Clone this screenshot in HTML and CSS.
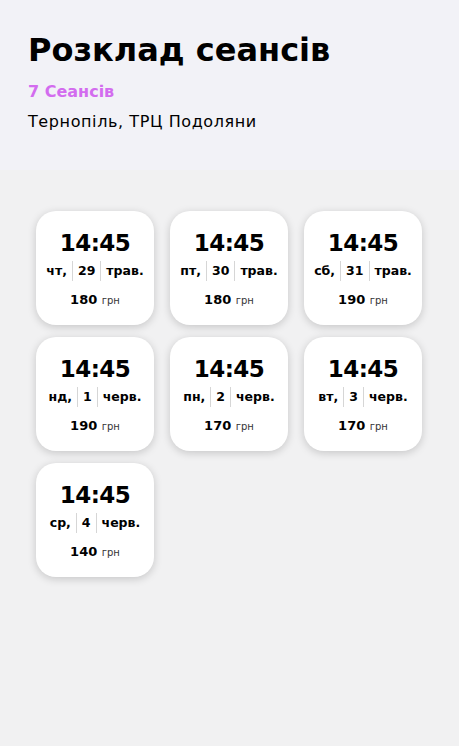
FILE: index.html
```html
<!DOCTYPE html>
<html lang="uk">
<head>
    <meta charset="UTF-8">
    <meta name="viewport" content="width=device-width, initial-scale=1.0">
    <title>Розклад сеансів</title>
    <link rel="stylesheet" href="styles.css">
</head>
<body>
    <header class="header">
        <h1 class="title">Розклад сеансів</h1>
        <div class="count">7 Сеансів</div>
        <div class="place">Тернопіль, ТРЦ Подоляни</div>
    </header>
    <main class="sessions">
        <div class="card">
            <div class="time">14:45</div>
            <div class="date"><span>чт,</span><span>29</span><span>трав.</span></div>
            <div class="price">180 <small>грн</small></div>
        </div>
        <div class="card">
            <div class="time">14:45</div>
            <div class="date"><span>пт,</span><span>30</span><span>трав.</span></div>
            <div class="price">180 <small>грн</small></div>
        </div>
        <div class="card">
            <div class="time">14:45</div>
            <div class="date"><span>сб,</span><span>31</span><span>трав.</span></div>
            <div class="price">190 <small>грн</small></div>
        </div>
        <div class="card">
            <div class="time">14:45</div>
            <div class="date"><span>нд,</span><span>1</span><span>черв.</span></div>
            <div class="price">190 <small>грн</small></div>
        </div>
        <div class="card">
            <div class="time">14:45</div>
            <div class="date"><span>пн,</span><span>2</span><span>черв.</span></div>
            <div class="price">170 <small>грн</small></div>
        </div>
        <div class="card">
            <div class="time">14:45</div>
            <div class="date"><span>вт,</span><span>3</span><span>черв.</span></div>
            <div class="price">170 <small>грн</small></div>
        </div>
        <div class="card">
            <div class="time">14:45</div>
            <div class="date"><span>ср,</span><span>4</span><span>черв.</span></div>
            <div class="price">140 <small>грн</small></div>
        </div>
    </main>
</body>
</html>
```

FILE: styles.css
```css
body {
    margin: 0;
    font-family: "DejaVu Sans", sans-serif;
    background: #f1f1f2;
    color: #000;
    min-height: 100vh;
}

.header {
    background: #f2f2f7;
    padding: 30px 28px 0;
    height: 140px;
}

.title {
    margin: 0;
    font-size: 32px;
    line-height: 40px;
    font-weight: bold;
}

.count {
    margin-top: 12px;
    color: #d36cef;
    font-size: 16px;
    font-weight: bold;
    line-height: 20px;
}

.place {
    margin-top: 10px;
    font-size: 16px;
    line-height: 20px;
    letter-spacing: 0.6px;
}

.sessions {
    display: grid;
    grid-template-columns: repeat(3, 118px);
    gap: 12px 16px;
    padding: 41px 36px;
}

.card {
    height: 114px;
    box-sizing: border-box;
    background: #fff;
    border-radius: 20px;
    box-shadow: 0 2px 8px rgba(0, 0, 0, 0.18);
    padding: 17px 4px 0;
    text-align: center;
}

.time {
    font-size: 23px;
    font-weight: bold;
    line-height: 30px;
    letter-spacing: -0.5px;
}

.date {
    margin-top: 3px;
    display: flex;
    justify-content: center;
    font-size: 12.5px;
    font-weight: bold;
    line-height: 20px;
}

.date span {
    padding: 0 5px;
}

.date span + span {
    border-left: 1px solid #d6d6d6;
}

.price {
    margin-top: 10px;
    font-size: 13px;
    font-weight: bold;
    line-height: 18px;
}

.price small {
    font-size: 10px;
    line-height: 1;
    font-weight: normal;
    color: #333;
}
```
